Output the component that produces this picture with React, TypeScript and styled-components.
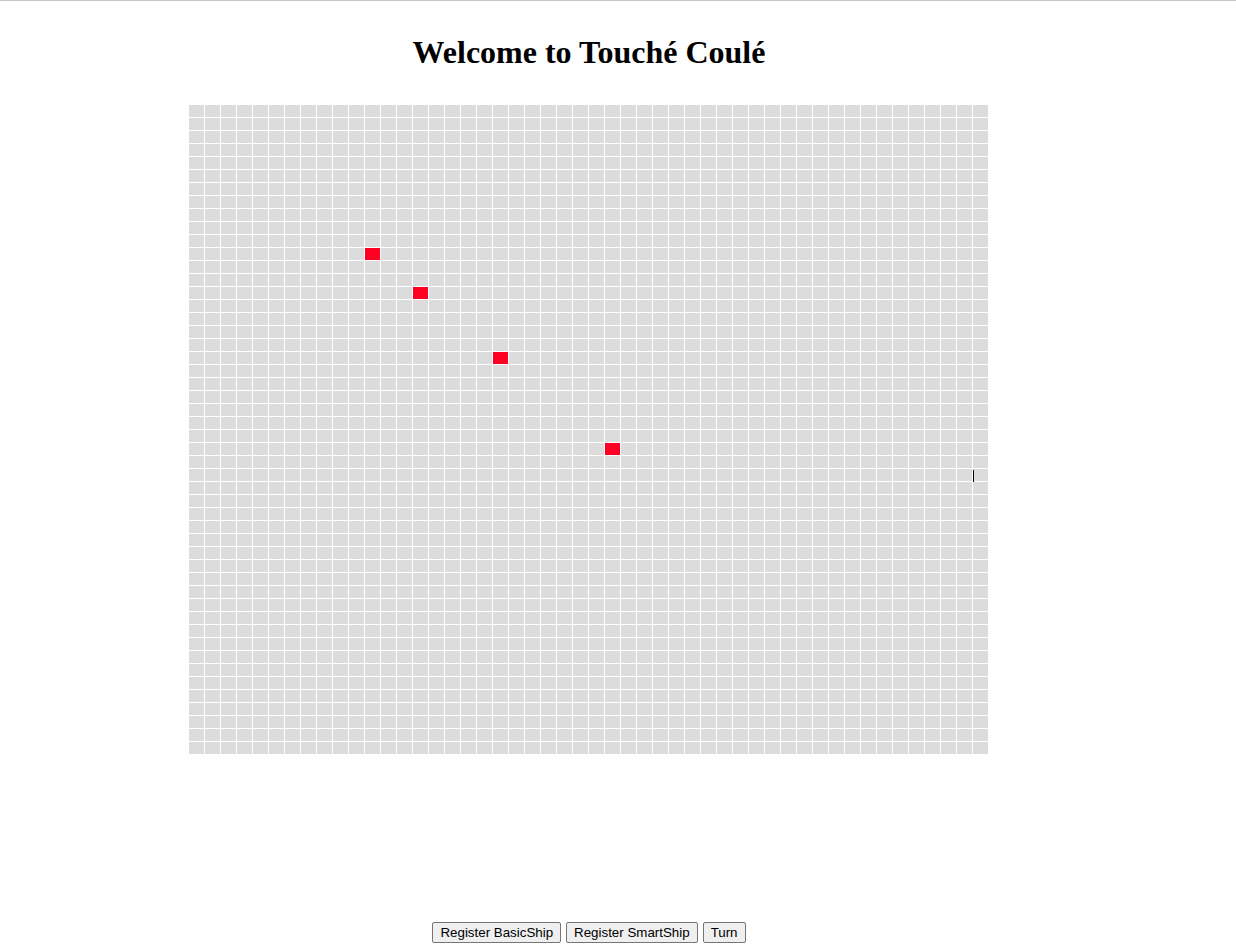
import React from "react";
import styled, { createGlobalStyle } from "styled-components";

const GlobalStyle = createGlobalStyle`
  html, body { margin: 0; padding: 0; background: #ffffff; }
  body {
    font-family: "Liberation Serif", "Times New Roman", serif;
    border-top: 1px solid #c6c6c6;
  }
`;

const COLS = 50;
const ROWS = 50;
const HITS = new Set(["11-11", "14-14", "19-19", "26-26"]);

const Page = styled.div`
  width: 1178px;
  display: flex;
  flex-direction: column;
  align-items: center;
`;

const Title = styled.h1`
  margin: 33px 0 0 0;
  font-family: "Liberation Serif", "Times New Roman", serif;
  font-size: 32px;
  font-weight: bold;
  color: #000;
  line-height: 37px;
`;

const BoardWrap = styled.div`
  position: relative;
  margin-top: 34px;
`;

const Board = styled.div`
  display: grid;
  grid-template-columns: repeat(${COLS}, 15px);
  grid-auto-rows: 12px;
  gap: 1px;
  padding: 0 1px 1px 0;
  width: 799px;
`;

const Cell = styled.div<{ $hit: boolean }>`
  background: ${(p) => (p.$hit ? "#ff0024" : "#dcdcdc")};
`;

const Caret = styled.div`
  position: absolute;
  left: 784px;
  top: 365px;
  width: 1px;
  height: 12px;
  background: #000;
`;

const Controls = styled.div`
  margin-top: 167px;
  display: flex;
  gap: 5px;
`;

const Button = styled.button`
  font-family: "Liberation Sans", Arial, sans-serif;
  font-size: 13.3333px;
  height: 21px;
  padding: 1px 7px;
  background: #efefef;
  color: #000;
  border: 1px solid #767676;
  border-radius: 2px;
  line-height: normal;
  cursor: default;
`;

export default function App() {
  const cells: React.ReactNode[] = [];
  for (let r = 0; r < ROWS; r++) {
    for (let c = 0; c < COLS; c++) {
      cells.push(<Cell key={`${r}-${c}`} $hit={HITS.has(`${r}-${c}`)} />);
    }
  }
  return (
    <>
      <GlobalStyle />
      <Page>
        <Title>Welcome to Touché Coulé</Title>
        <BoardWrap>
          <Board>{cells}</Board>
          <Caret />
        </BoardWrap>
        <Controls>
          <Button>Register BasicShip</Button>
          <Button>Register SmartShip</Button>
          <Button>Turn</Button>
        </Controls>
      </Page>
    </>
  );
}
